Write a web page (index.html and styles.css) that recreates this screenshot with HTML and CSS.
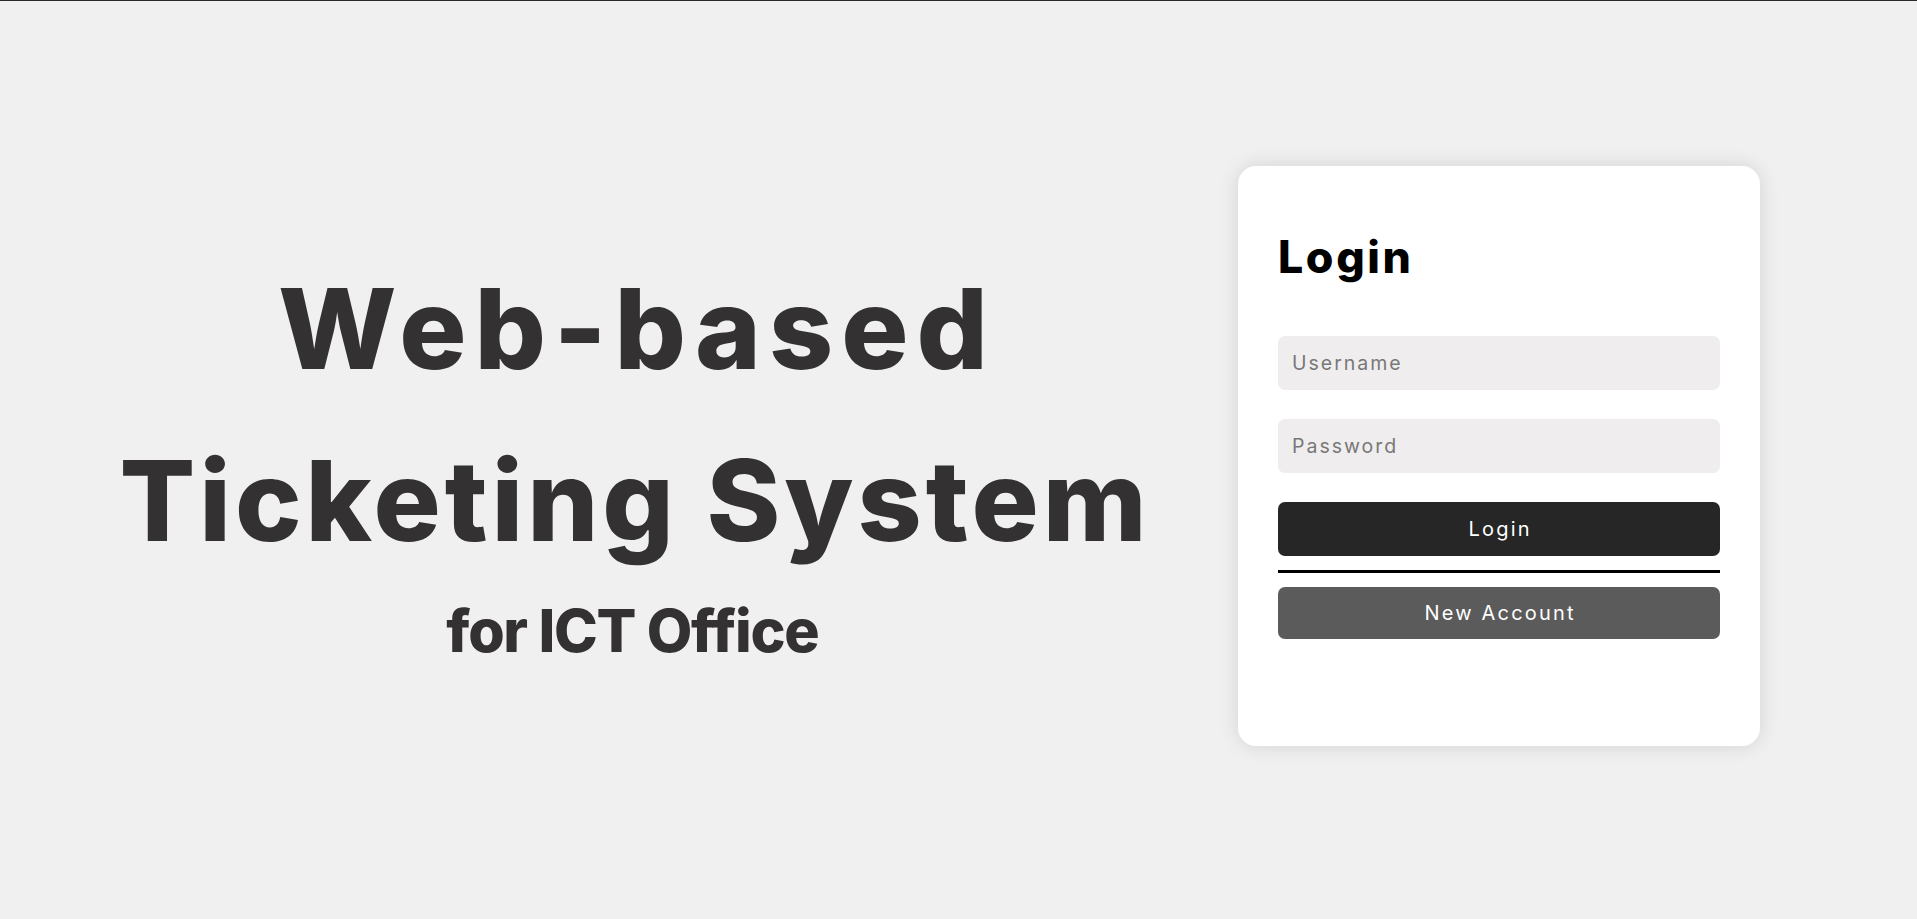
FILE: index.html
```html
<!DOCTYPE html>
<html lang="en">
<head>
<meta charset="utf-8">
<title>Login - Web-based Ticketing System</title>
<link rel="stylesheet" href="styles.css">
</head>
<body>
<main class="page">
  <section class="hero">
    <div class="hero-line hero-line-1">Web-based</div>
    <div class="hero-line hero-line-2">Ticketing System</div>
    <div class="hero-sub">for ICT Office</div>
  </section>
  <form class="card">
    <h1 class="card-title">Login</h1>
    <input class="field field-first" type="text" placeholder="Username">
    <input class="field" type="password" placeholder="Password">
    <button class="btn btn-primary" type="button">Login</button>
    <div class="divider"></div>
    <button class="btn btn-secondary" type="button">New Account</button>
  </form>
</main>
</body>
</html>
```
FILE: styles.css
```css
* { box-sizing: border-box; }
html, body { margin: 0; padding: 0; }
body {
  background: #f0f0f0;
  border-top: 1px solid #2b2b2b;
  font-family: Inter, "Noto Sans", sans-serif;
  height: 919px;
  overflow: hidden;
}
.page {
  display: flex;
  align-items: center;
  height: 918px;
  padding-bottom: 8px;
}
.hero {
  flex: 0 0 1238px;
  padding-left: 28px;
  padding-top: 6px;
  text-align: center;
  color: #333132;
  font-weight: 800;
}
.hero-line {
  font-size: 112px;
  line-height: 172px;
}
.hero-line-1 { letter-spacing: 8px; text-indent: 8px; }
.hero-line-2 { letter-spacing: 4px; text-indent: 4px; }
.hero-sub {
  font-size: 59px;
  line-height: 90px;
  letter-spacing: -1.3px;
  text-indent: -1.3px;
}
.card {
  flex: 0 0 522px;
  min-height: 580px;
  background: #fff;
  border-radius: 18px;
  box-shadow: 0 0 20px rgba(0, 0, 0, 0.12);
  padding: 40px;
  display: flex;
  flex-direction: column;
}
.card-title {
  margin: 23px 0 0;
  font-size: 44.7px;
  line-height: 56px;
  font-weight: 800;
  letter-spacing: 2.6px;
  color: #000;
}
.field {
  height: 54px;
  margin-top: 29px;
  border: none;
  border-radius: 7px;
  background: #efedee;
  padding: 0 14px;
  font-family: inherit;
  font-size: 19.5px;
  letter-spacing: 2px;
  color: #333;
  outline: none;
}
.field-first { margin-top: 51px; }
.field::placeholder { color: #787878; }
.btn {
  border: none;
  border-radius: 7px;
  color: #fff;
  font-family: inherit;
  font-size: 20px;
  letter-spacing: 2.2px;
  text-indent: 2.2px;
  padding: 0;
}
.btn-primary { height: 54px; margin-top: 29px; background: #262626; }
.divider { height: 3px; background: #000; margin-top: 14px; }
.btn-secondary { height: 52px; margin-top: 14px; background: #5b5b5b; }
```
